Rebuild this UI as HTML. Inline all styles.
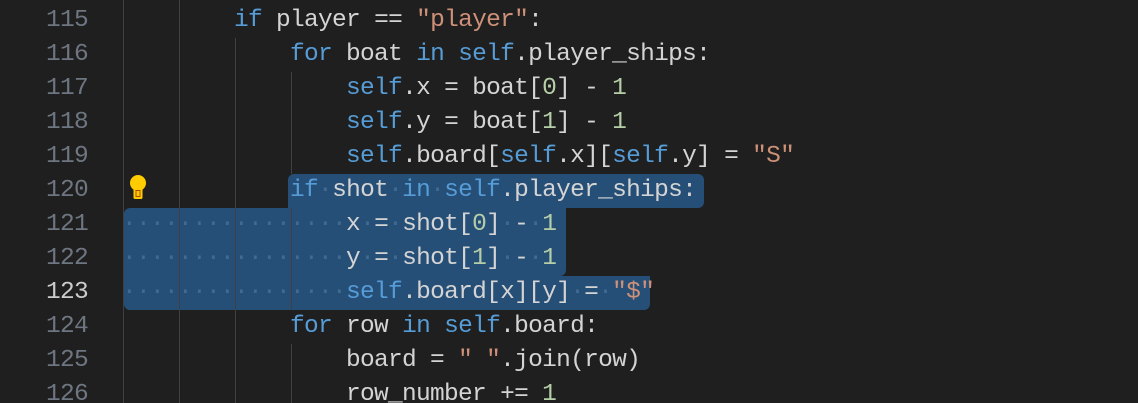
<!DOCTYPE html>
<html><head><meta charset="utf-8"><style>
html,body{margin:0;padding:0;background:#1f1f1f;width:1138px;height:403px;overflow:hidden;position:relative}
.ln{position:absolute;left:0;width:88px;text-align:right;font:24.5px/34px "Liberation Mono",monospace;letter-spacing:-0.7px;color:#6e7681}
.c{position:absolute;left:122px;font:24.5px/34px "Liberation Mono",monospace;letter-spacing:-0.7px;color:#d4d4d4;white-space:pre}
.k{color:#569cd6}.s{color:#ce9178}.n{color:#b5cea8}.w{color:#3f6a91}
.g{position:absolute;width:1px;background:#404040}
.sel{position:absolute;background:#264f78}
</style></head><body>
<div class="sel" style="left:288px;top:174px;width:416px;height:34px;border-radius:6px 6px 6px 0"></div>
<div class="sel" style="left:124px;top:208px;width:442px;height:68px;border-radius:6px 0 6px 0"></div>
<div class="sel" style="left:124px;top:276px;width:526px;height:34px;border-radius:0 0 6px 6px"></div>
<div class="g" style="left:123px;top:0;height:403px"></div>
<div class="g" style="left:179px;top:0;height:403px"></div>
<div class="g" style="left:235px;top:38px;height:403px"></div>
<div class="g" style="left:291px;top:72px;height:102px"></div>
<div class="g" style="left:291px;top:208px;height:102px"></div>
<div class="g" style="left:291px;top:344px;height:59px"></div>
<svg style="position:absolute;left:129px;top:175px" width="18" height="24" viewBox="0 0 18 24"><circle cx="9" cy="8" r="8" fill="#ffcc00"/><rect x="4.5" y="11" width="9" height="13" rx="1.5" fill="#ffcc00"/><rect x="6.5" y="15" width="5" height="7" fill="#b34a00"/><rect x="7.5" y="16" width="3" height="5" fill="#ffcc00"/></svg>
<div class="ln" style="top:4px">115</div>
<div class="ln" style="top:38px">116</div>
<div class="ln" style="top:72px">117</div>
<div class="ln" style="top:106px">118</div>
<div class="ln" style="top:140px">119</div>
<div class="ln" style="top:174px">120</div>
<div class="ln" style="top:208px">121</div>
<div class="ln" style="top:242px">122</div>
<div class="ln" style="top:276px;color:#cccccc">123</div>
<div class="ln" style="top:310px">124</div>
<div class="ln" style="top:344px">125</div>
<div class="ln" style="top:378px">126</div>
<div class="c" style="top:4px">        <span class="k">if</span> player == <span class="s">"player"</span>:</div>
<div class="c" style="top:38px">            <span class="k">for</span> boat <span class="k">in</span> <span class="k">self</span>.player_ships:</div>
<div class="c" style="top:72px">                <span class="k">self</span>.x = boat[<span class="n">0</span>] - <span class="n">1</span></div>
<div class="c" style="top:106px">                <span class="k">self</span>.y = boat[<span class="n">1</span>] - <span class="n">1</span></div>
<div class="c" style="top:140px">                <span class="k">self</span>.board[<span class="k">self</span>.x][<span class="k">self</span>.y] = <span class="s">"S"</span></div>
<div class="c" style="top:174px">            <span class="k">if</span><span class="w">·</span>shot<span class="w">·</span><span class="k">in</span><span class="w">·</span><span class="k">self</span>.player_ships:</div>
<div class="c" style="top:208px"><span class="w">················</span>x<span class="w">·</span>=<span class="w">·</span>shot[<span class="n">0</span>]<span class="w">·</span>-<span class="w">·</span><span class="n">1</span></div>
<div class="c" style="top:242px"><span class="w">················</span>y<span class="w">·</span>=<span class="w">·</span>shot[<span class="n">1</span>]<span class="w">·</span>-<span class="w">·</span><span class="n">1</span></div>
<div class="c" style="top:276px"><span class="w">················</span><span class="k">self</span>.board[x][y]<span class="w">·</span>=<span class="w">·</span><span class="s">"$"</span></div>
<div class="c" style="top:310px">            <span class="k">for</span> row <span class="k">in</span> <span class="k">self</span>.board:</div>
<div class="c" style="top:344px">                board = <span class="s">" "</span>.join(row)</div>
<div class="c" style="top:378px">                row_number += <span class="n">1</span></div>
</body></html>
